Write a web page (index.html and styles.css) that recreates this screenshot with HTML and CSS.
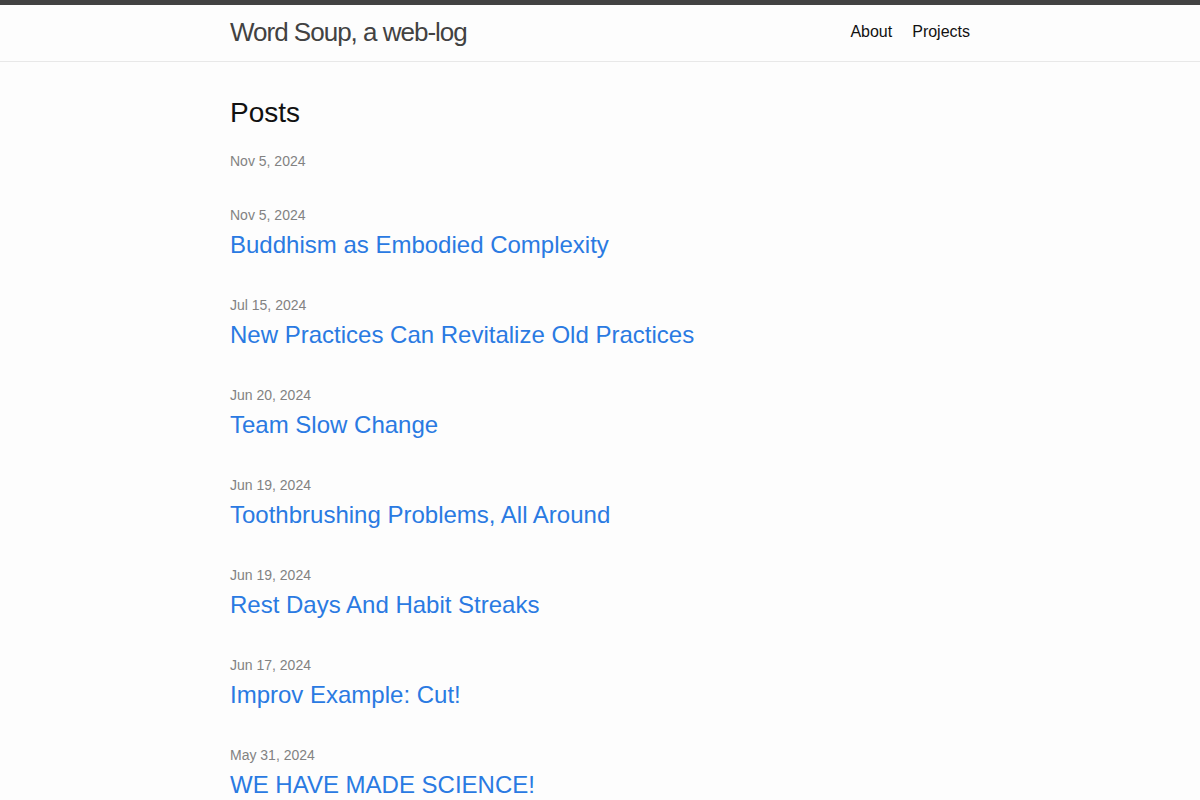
FILE: index.html
```html
<!DOCTYPE html>
<html lang="en">
<head>
    <meta charset="UTF-8">
    <meta name="viewport" content="width=device-width, initial-scale=1.0">
    <title>Word Soup, a web-log</title>
    <link rel="stylesheet" href="styles.css">
</head>
<body>
    <header class="site-header">
        <div class="wrapper header-row">
            <a class="site-title" href="#">Word Soup, a web-log</a>
            <nav class="site-nav">
                <a class="page-link" href="#">About</a>
                <a class="page-link" href="#">Projects</a>
            </nav>
        </div>
    </header>
    <main class="page-content">
        <div class="wrapper">
            <h2 class="post-list-heading">Posts</h2>
            <ul class="post-list">
                <li>
                    <span class="post-meta">Nov 5, 2024</span>
                    <h3><a class="post-link" href="#"></a></h3>
                </li>
                <li>
                    <span class="post-meta">Nov 5, 2024</span>
                    <h3><a class="post-link" href="#">Buddhism as Embodied Complexity</a></h3>
                </li>
                <li>
                    <span class="post-meta">Jul 15, 2024</span>
                    <h3><a class="post-link" href="#">New Practices Can Revitalize Old Practices</a></h3>
                </li>
                <li>
                    <span class="post-meta">Jun 20, 2024</span>
                    <h3><a class="post-link" href="#">Team Slow Change</a></h3>
                </li>
                <li>
                    <span class="post-meta">Jun 19, 2024</span>
                    <h3><a class="post-link" href="#">Toothbrushing Problems, All Around</a></h3>
                </li>
                <li>
                    <span class="post-meta">Jun 19, 2024</span>
                    <h3><a class="post-link" href="#">Rest Days And Habit Streaks</a></h3>
                </li>
                <li>
                    <span class="post-meta">Jun 17, 2024</span>
                    <h3><a class="post-link" href="#">Improv Example: Cut!</a></h3>
                </li>
                <li>
                    <span class="post-meta">May 31, 2024</span>
                    <h3><a class="post-link" href="#">WE HAVE MADE SCIENCE!</a></h3>
                </li>
            </ul>
        </div>
    </main>
</body>
</html>
```

FILE: styles.css
```css
body {
    margin: 0;
    padding: 0;
    font: 400 16px/1.5 "Liberation Sans", Helvetica, Arial, sans-serif;
    color: #111;
    background-color: #fdfdfd;
}

a {
    color: #2a7ae2;
    text-decoration: none;
}

.wrapper {
    max-width: 740px;
    margin: 0 auto;
    padding: 0 30px;
}

.site-header {
    border-top: 5px solid #424242;
    border-bottom: 1px solid #e8e8e8;
    min-height: 56px;
}

.header-row {
    display: flex;
    justify-content: space-between;
    align-items: flex-start;
}

.site-title {
    font-size: 26px;
    font-weight: 300;
    line-height: 54px;
    letter-spacing: -1px;
    color: #424242;
}

.site-nav {
    display: flex;
    gap: 20px;
    line-height: 54px;
}

.page-link {
    color: #111;
}

.page-content {
    padding: 30px 0;
}

.post-list-heading {
    font-size: 28px;
    font-weight: 400;
    line-height: 42px;
    margin: 0 0 15px;
}

.post-list {
    list-style: none;
    margin: 0;
    padding: 0;
}

.post-list li {
    margin-bottom: 30px;
}

.post-meta {
    display: block;
    font-size: 14px;
    line-height: 24px;
    color: #828282;
}

.post-list h3 {
    margin: 0;
    font-weight: 400;
}

.post-link {
    display: block;
    font-size: 24px;
    line-height: 36px;
}
```
